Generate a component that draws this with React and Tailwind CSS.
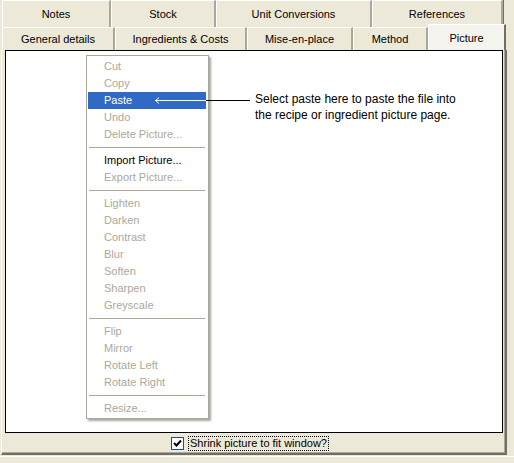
const row1 = [
  { label: "Notes", w: "w-[109px]" },
  { label: "Stock", w: "w-[105px]" },
  { label: "Unit Conversions", w: "w-[156px]" },
  { label: "References", w: "w-[131px]" },
];

const row2 = [
  { label: "General details", w: "w-[113px]" },
  { label: "Ingredients & Costs", w: "w-[132px]" },
  { label: "Mise-en-place", w: "w-[106px]" },
  { label: "Method", w: "w-[75px]" },
];

const menu = [
  [
    { label: "Cut" },
    { label: "Copy" },
    { label: "Paste", active: true },
    { label: "Undo" },
    { label: "Delete Picture..." },
  ],
  [{ label: "Import Picture...", enabled: true }, { label: "Export Picture..." }],
  [
    { label: "Lighten" },
    { label: "Darken" },
    { label: "Contrast" },
    { label: "Blur" },
    { label: "Soften" },
    { label: "Sharpen" },
    { label: "Greyscale" },
  ],
  [{ label: "Flip" }, { label: "Mirror" }, { label: "Rotate Left" }, { label: "Rotate Right" }],
  [{ label: "Resize..." }],
];

const Tab = ({ label, w, h = "h-full" }) => (
  <div
    className={`${w} ${h} flex shrink-0 items-center justify-center border-l border-t border-white border-r-2 border-r-[#aca899] pt-[1px] shadow-[1px_0_0_#716f64] bg-[#ece9d8]`}
  >
    {label}
  </div>
);

const MenuItem = ({ label, active, enabled }) => (
  <div
    className={`flex h-[17px] items-center pl-[16px] ${
      active ? "bg-[#316ac5] text-white" : enabled ? "text-black" : "text-[#aca899]"
    }`}
  >
    {label}
  </div>
);

const App = () => {
  return (
    <div className="flex h-[463px] w-[514px] flex-col overflow-hidden bg-[#ece9d8] font-['Liberation_Sans',Arial,sans-serif] text-[11px] text-black">
      <div className="flex h-[27px] shrink-0 pl-[2px]">
        {row1.map((t) => (
          <Tab key={t.label} {...t} />
        ))}
      </div>

      <div className="relative z-10 flex h-[23px] shrink-0 items-end pl-[2px]">
        {row2.map((t) => (
          <Tab key={t.label} {...t} />
        ))}
        <div className="flex h-[26px] w-[78px] shrink-0 items-start justify-center border-l border-t border-white border-r-2 border-r-[#716f64] bg-[#f4f3ee] pt-[5px]">
          Picture
        </div>
      </div>

      <div className="ml-[1px] flex h-[405px] w-[506px] shrink-0 flex-col border-b-2 border-l border-r-2 border-b-[#716f64] border-l-white border-r-[#716f64] pl-[3px] pr-[2px] shadow-[inset_-1px_-1px_0_#aca899]">
        <div className="relative h-[383px] shrink-0 border border-black bg-white">
          <div className="absolute left-[80px] top-[4px] w-[123px] border border-[#aca899] bg-white pb-[1px] pl-[1px] pr-[2px] pt-[2px] shadow-[2px_2px_2px_rgba(0,0,0,0.35)]">
            {menu.map((group, gi) => (
              <div key={gi}>
                {gi > 0 && (
                  <div className="flex h-[9px] items-center px-[1px]">
                    <div className="h-px w-full bg-[#aca899]" />
                  </div>
                )}
                {group.map((item) => (
                  <MenuItem key={item.label} {...item} />
                ))}
              </div>
            ))}
          </div>

          <svg className="absolute left-[148px] top-[45px]" width="98" height="9" viewBox="0 0 98 9">
            <line x1="1" y1="4.5" x2="52" y2="4.5" stroke="#fff" strokeWidth="1" />
            <line x1="52" y1="4.5" x2="96" y2="4.5" stroke="#000" strokeWidth="1" />
            <path d="M5 1.5 L1.5 4.5 L5 7.5" fill="none" stroke="#fff" strokeWidth="1" />
          </svg>

          <div className="absolute left-[249px] top-[40px] text-[12px] leading-[16px]">
            <p>Select paste here to paste the file into</p>
            <p>the recipe or ingredient picture page.</p>
          </div>
        </div>

        <div className="flex flex-1 items-center justify-center gap-[4px] pr-[8px]">
          <div className="flex h-[13px] w-[13px] items-center justify-center border border-[#1c5180] bg-white">
            <svg width="9" height="9" viewBox="0 0 9 9">
              <path d="M1 4 L3.5 6.5 L8 1.5" fill="none" stroke="#000" strokeWidth="2" />
            </svg>
          </div>
          <span className="border border-dotted border-black px-[1px] text-[11px] leading-[13px]">
            Shrink picture to fit window?
          </span>
        </div>
      </div>

      <div className="mt-[1px] h-px w-full bg-white" />
    </div>
  );
};

export default App;
